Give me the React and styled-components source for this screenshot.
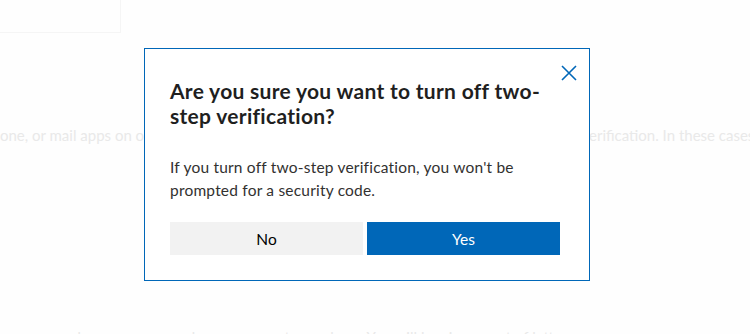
import React from "react";
import styled, { createGlobalStyle } from "styled-components";

const Global = createGlobalStyle`
  html, body { margin: 0; padding: 0; background: #fefefe; }
  body { font-family: "Lato", "Noto Sans", sans-serif; }
`;

const Page = styled.div`
  position: relative;
  width: 750px;
  height: 334px;
  overflow: hidden;
  background: #fefefe;
  display: flex;
  flex-direction: column;
`;

const TopBox = styled.div`
  flex: none;
  width: 121px;
  height: 33px;
  border-right: 1px solid #f5f5f5;
  border-bottom: 1px solid #f5f5f5;
  box-sizing: border-box;
`;

const FadedLine = styled.p`
  flex: none;
  margin: ${(p) => p.$top}px 0 0 ${(p) => p.$indent}px;
  font-size: 15px;
  line-height: 22px;
  color: #e9e9e9;
  white-space: nowrap;
`;

const Overlay = styled.div`
  position: absolute;
  inset: 0;
  padding: 48px 0 0 144px;
  box-sizing: border-box;
`;

const Dialog = styled.div`
  position: relative;
  width: 446px;
  box-sizing: border-box;
  background: #ffffff;
  border: 1px solid #0067b8;
  padding: 29px 29px 25px 25px;
  display: flex;
  flex-direction: column;
`;

const Close = styled.button`
  position: absolute;
  top: 15px;
  right: 11px;
  width: 18px;
  height: 18px;
  padding: 0;
  border: 0;
  background: transparent;
  display: flex;
  align-items: center;
  justify-content: center;
  cursor: pointer;
`;

const Title = styled.h2`
  margin: 0 0 28px 0;
  font-size: 21px;
  line-height: 25px;
  font-weight: 700;
  color: #1f1f1f;
  letter-spacing: 0.3px;
`;

const Body = styled.p`
  margin: 0 0 20px 0;
  font-size: 15.5px;
  line-height: 23px;
  color: #323130;
  letter-spacing: 0.2px;
`;

const Buttons = styled.div`
  display: grid;
  grid-template-columns: 193px 193px;
  gap: 4px;
`;

const Button = styled.button`
  height: 33px;
  border: 0;
  padding: 0;
  font-family: inherit;
  font-size: 15.5px;
  background: ${(p) => (p.$primary ? "#0067b8" : "#f2f2f2")};
  color: ${(p) => (p.$primary ? "#ffffff" : "#000000")};
  cursor: pointer;
`;

export default function App() {
  return (
    <>
      <Global />
      <Page>
        <TopBox />
        <FadedLine $top={91} $indent={0}>
          one, or mail apps on older devices and some other desktop apps, don't support two-step verification. In these cases, you'll need an app password.
        </FadedLine>
        <FadedLine $top={180} $indent={20}>
          you need an app password, you can create one here. You will be given a set of letters.
        </FadedLine>
        <Overlay>
          <Dialog role="dialog">
            <Close aria-label="Close">
              <svg width="16" height="16" viewBox="0 0 16 16">
                <path d="M1 1 L15 15 M15 1 L1 15" stroke="#0067b8" strokeWidth="1.6" fill="none" />
              </svg>
            </Close>
            <Title>Are you sure you want to turn off two-step verification?</Title>
            <Body>If you turn off two-step verification, you won't be prompted for a security code.</Body>
            <Buttons>
              <Button>No</Button>
              <Button $primary>Yes</Button>
            </Buttons>
          </Dialog>
        </Overlay>
      </Page>
    </>
  );
}
